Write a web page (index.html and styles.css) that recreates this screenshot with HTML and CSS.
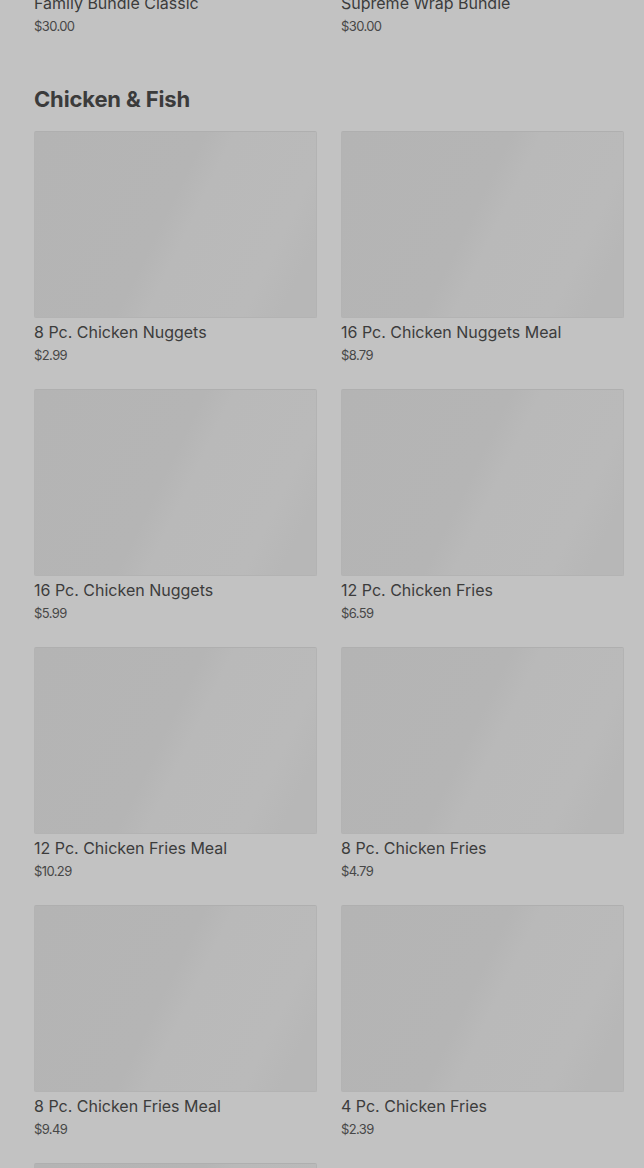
FILE: index.html
```html
<!DOCTYPE html>
<html lang="en">
<head>
<meta charset="utf-8">
<title>Menu</title>
<link rel="stylesheet" href="styles.css">
</head>
<body>
<main class="menu">
  <section class="section section-prev">
    <div class="grid">
      <div class="card"><div class="thumb"></div><div class="name">Family Bundle Classic</div><div class="price">$30.00</div></div>
      <div class="card"><div class="thumb"></div><div class="name">Supreme Wrap Bundle</div><div class="price">$30.00</div></div>
    </div>
  </section>
  <section class="section">
    <h2 class="section-title">Chicken &amp; Fish</h2>
    <div class="grid">
      <div class="card"><div class="thumb"></div><div class="name">8 Pc. Chicken Nuggets</div><div class="price">$2.99</div></div>
      <div class="card"><div class="thumb"></div><div class="name">16 Pc. Chicken Nuggets Meal</div><div class="price">$8.79</div></div>
      <div class="card"><div class="thumb"></div><div class="name">16 Pc. Chicken Nuggets</div><div class="price">$5.99</div></div>
      <div class="card"><div class="thumb"></div><div class="name">12 Pc. Chicken Fries</div><div class="price">$6.59</div></div>
      <div class="card"><div class="thumb"></div><div class="name">12 Pc. Chicken Fries Meal</div><div class="price">$10.29</div></div>
      <div class="card"><div class="thumb"></div><div class="name">8 Pc. Chicken Fries</div><div class="price">$4.79</div></div>
      <div class="card"><div class="thumb"></div><div class="name">8 Pc. Chicken Fries Meal</div><div class="price">$9.49</div></div>
      <div class="card"><div class="thumb"></div><div class="name">4 Pc. Chicken Fries</div><div class="price">$2.39</div></div>
      <div class="card"><div class="thumb"></div><div class="name">Big Fish Sandwich</div><div class="price">$5.49</div></div>
    </div>
  </section>
</main>
</body>
</html>
```

FILE: styles.css
```css
html, body {
  margin: 0;
  padding: 0;
  background: #c2c2c2;
  overflow: hidden;
}
body {
  font-family: Inter, Roboto, "Liberation Sans", sans-serif;
  color: #404040;
}
.menu {
  padding: 0 20px 0 34px;
  margin-top: -198px;
}
.section {
  margin-bottom: 49px;
}
.section-title {
  margin: 0 0 17px;
  font-size: 22px;
  line-height: 30px;
  font-weight: 700;
  letter-spacing: -0.15px;
  color: #3b3b3b;
}
.grid {
  display: grid;
  grid-template-columns: 1fr 1fr;
  column-gap: 24px;
  row-gap: 25px;
}
.card {
  display: flex;
  flex-direction: column;
}
.thumb {
  height: 187px;
  border-radius: 2px;
  box-sizing: border-box;
  border: 1px solid #b3b3b3;
  border-top-color: #afafaf;
  background: linear-gradient(116deg, #b4b4b4 0%, #b5b5b5 46%, #b9b9b9 54%, #bababa 80%, #b7b7b7 90%, #b7b7b7 100%);
}
.name {
  margin-top: 3px;
  font-size: 16px;
  line-height: 22px;
  font-weight: 400;
  color: #3c3c3c;
}
.price {
  margin-top: 3px;
  font-size: 13px;
  line-height: 18px;
  color: #474747;
  letter-spacing: -0.6px;
}
```
